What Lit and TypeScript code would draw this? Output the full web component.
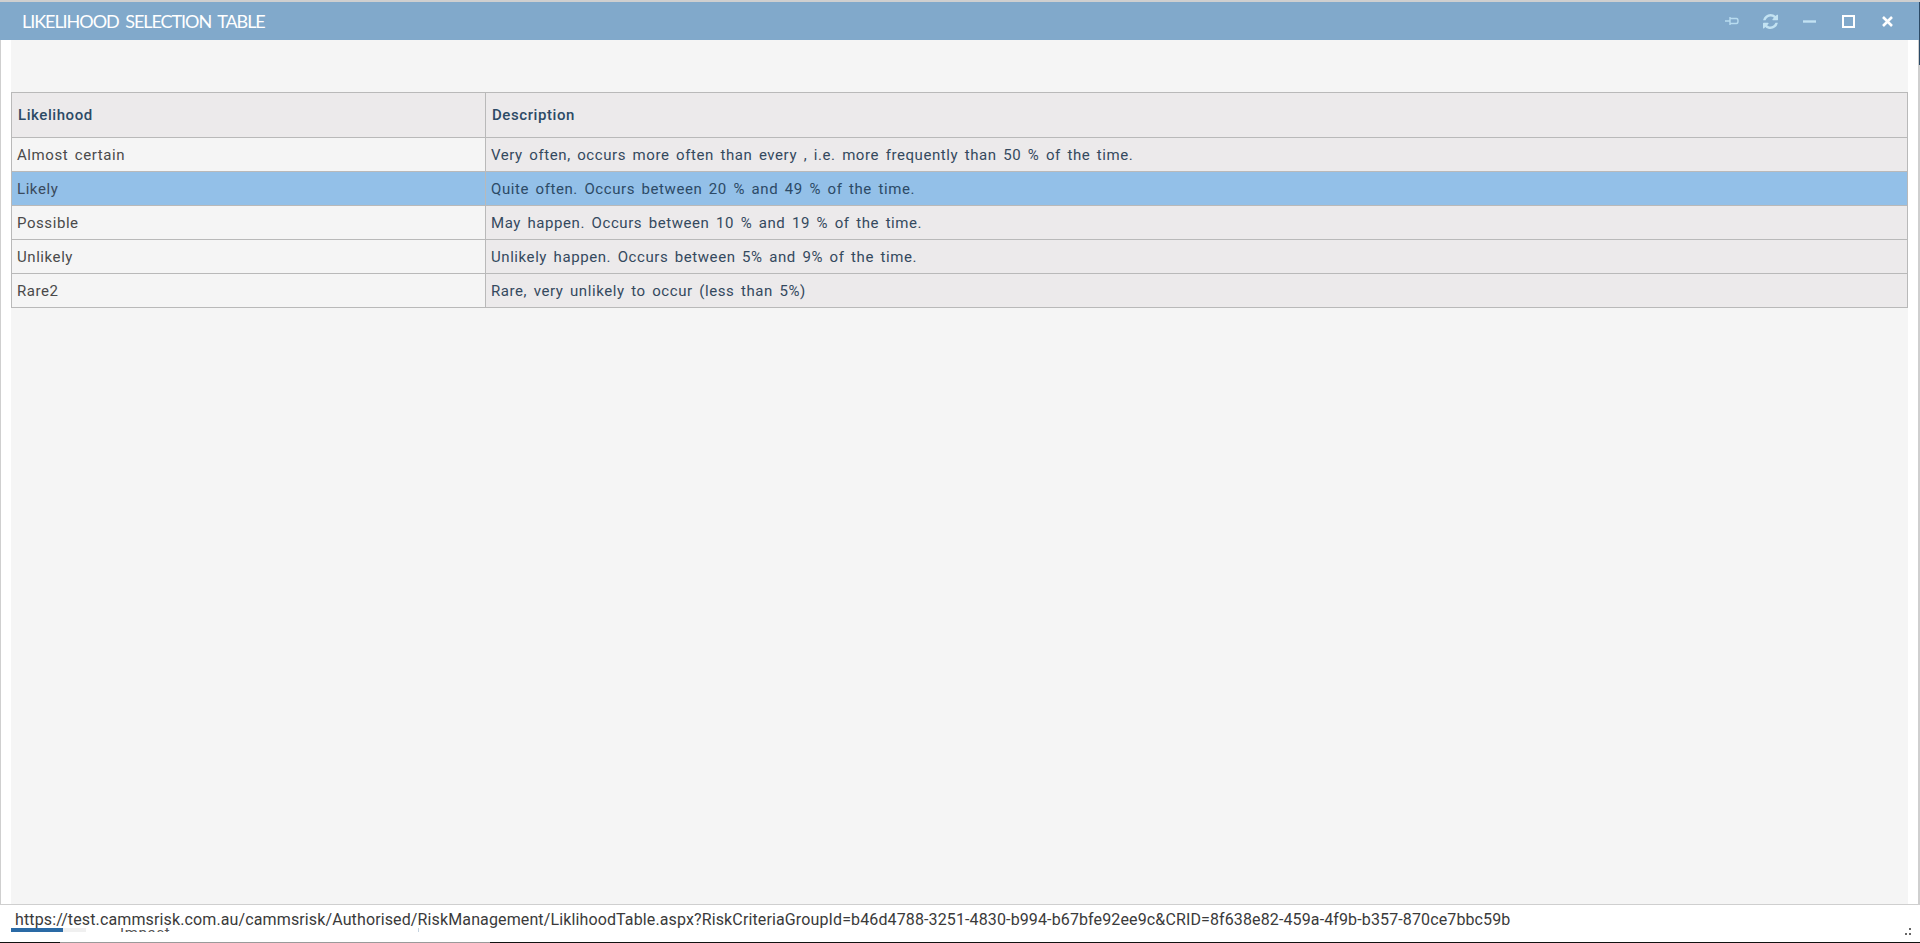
import { LitElement, html, css, svg } from "lit";
import { customElement } from "lit/decorators.js";

const ROWS = [
  ["Almost certain", "Very often, occurs more often than every , i.e. more frequently than 50 % of the time."],
  ["Likely", "Quite often. Occurs between 20 % and 49 % of the time."],
  ["Possible", "May happen. Occurs between 10 % and 19 % of the time."],
  ["Unlikely", "Unlikely happen. Occurs between 5% and 9% of the time."],
  ["Rare2", "Rare, very unlikely to occur (less than 5%)"],
];

const URL = "https://test.cammsrisk.com.au/cammsrisk/Authorised/RiskManagement/LiklihoodTable.aspx?RiskCriteriaGroupId=b46d4788-3251-4830-b994-b67bfe92ee9c&CRID=8f638e82-459a-4f9b-b357-870ce7bbc59b";

@customElement("app-root")
export class AppRoot extends LitElement {
  static styles = css`
    :host { display: flex; flex-direction: column; width: 1920px; height: 943px; position: relative; overflow: hidden; background: #fff; font-family: Roboto, "Liberation Sans", sans-serif; }
    .top { height: 2px; background: #cfcfcf; flex: none; }
    .bar { height: 38px; flex: none; background: #81a9cb; display: flex; align-items: center; box-sizing: border-box; padding-left: 22px; color: #fff; font-family: Lato, sans-serif; font-size: 18px; letter-spacing: -1.05px; word-spacing: 3px; }
    .title { flex: 1; }
    .icons { display: flex; align-items: center; margin-right: 13px; }
    .ic { width: 39px; height: 20px; display: flex; align-items: center; justify-content: center; }
    .ic svg { display: block; }
    .main { flex: 1; display: flex; min-height: 0; }
    .gutter-l { width: 11px; flex: none; box-sizing: border-box; border-left: 1px solid #cfcfcf; }
    .gutter-r { width: 12px; flex: none; box-sizing: border-box; border-right: 2px solid #cfcfcf; }
    .content { flex: 1; background: #f5f5f5; padding-top: 52px; min-width: 0; }
    table { border-collapse: collapse; width: 1897px; table-layout: fixed; font-size: 15px; word-spacing: 2.3px; letter-spacing: 0.57px; }
    col.a { width: 474px; }
    th, td { border: 1px solid #b9b9b9; padding: 0; text-align: left; }
    th { height: 44px; background: #eceaeb; color: #2c4a66; font-weight: 500; padding-left: 6px; }
    td { height: 33px; padding-left: 5px; background: #f5f5f5; color: #4a4a4a; }
    td.d { background: #eceaeb; color: #34495e; padding-left: 5px; }
    tr.sel td { background: #93c0e8; color: #3a4a5c; }
    tr.sel td.d { color: #2c4a66; }
    .status { height: 39px; flex: none; box-sizing: border-box; border-top: 1px solid #cfcfcf; border-bottom: 1px solid #9a9a9a; background: #fff; padding: 5px 0 0 15px; font-size: 16px; letter-spacing: 0.126px; color: #3a3a3a; position: relative; white-space: nowrap; line-height: 20px; }
    .prog { position: absolute; left: 11px; top: 23px; width: 75px; height: 4px; background: #f0f0f0; }
    .prog i { display: block; width: 52px; height: 4px; background: #2a6aa5; }
    .clip { position: absolute; left: 120px; top: 23px; height: 4px; overflow: hidden; font-size: 15px; line-height: 10px; letter-spacing: 0.6px; color: #555; }
    .tick { position: absolute; left: 418px; top: 23px; width: 1px; height: 4px; background: #c5d3e0; }
    .grip { position: absolute; right: 8px; bottom: 6px; display: block; }
    .edge { position: absolute; right: 0; top: 2px; width: 1px; height: 63px; background: #2c4a66; }
    .black { position: absolute; left: 0; bottom: 0; width: 60px; height: 1px; background: #111; }
    .black2 { position: absolute; left: 490px; right: 0; bottom: 0; height: 1px; background: #111; }
  `;

  render() {
    return html`
      <div class="top"></div>
      <div class="bar">
        <div class="title">LIKELIHOOD SELECTION TABLE</div>
        <div class="icons">
          <span class="ic"><svg width="14" height="10" viewBox="0 0 14 10" fill="none" stroke="#b8dcf0" stroke-width="1.4"><path d="M0 5H5M5 1V9M5 2.5H11.5Q13 2.5 13 5T11.5 7.5H5"/></svg></span>
          <span class="ic"><svg width="15" height="15" viewBox="0 0 1536 1536" fill="#c2e2f2"><path d="M1511 928q0 5-1 7-64 268-268 434.5t-478 166.5q-146 0-282.5-55t-243.5-157l-129 129q-19 19-45 19t-45-19-19-45v-448q0-26 19-45t45-19h448q26 0 45 19t19 45-19 45l-137 137q71 66 161 102t187 36q134 0 250-65t186-179q11-17 53-117 8-23 30-23h192q13 0 22.5 9.5t9.5 22.5zm25-800v448q0 26-19 45t-45 19h-448q-26 0-45-19t-19-45 19-45l138-138q-148-137-349-137-134 0-250 65t-186 179q-11 17-53 117-8 23-30 23h-199q-13 0-22.5-9.5t-9.5-22.5v-7q65-268 270-434.5t480-166.5q146 0 284 55.5t245 156.5l130-129q19-19 45-19t45 19 19 45z"/></svg></span>
          <span class="ic"><svg width="13" height="3" viewBox="0 0 13 3"><rect width="13" height="2.4" y=".3" fill="#c2e2f2"/></svg></span>
          <span class="ic"><svg width="13" height="13" viewBox="0 0 13 13" fill="none" stroke="#fff" stroke-width="2"><rect x="1" y="1" width="11" height="11"/></svg></span>
          <span class="ic"><svg width="11" height="11" viewBox="0 0 11 11" fill="none" stroke="#fff" stroke-width="2.6"><path d="M1 1 10 10M10 1 1 10"/></svg></span>
        </div>
      </div>
      <div class="main">
        <div class="gutter-l"></div>
        <div class="content">
          <table>
            <colgroup><col class="a" /><col /></colgroup>
            <thead><tr><th>Likelihood</th><th>Description</th></tr></thead>
            <tbody>
              ${ROWS.map((r, i) => html`<tr class=${i === 1 ? "sel" : ""}><td>${r[0]}</td><td class="d">${r[1]}</td></tr>`)}
            </tbody>
          </table>
        </div>
        <div class="gutter-r"></div>
      </div>
      <div class="status">
        ${URL}
        <div class="prog"><i></i></div>
        <div class="clip">Impact</div>
        <div class="tick"></div>
        <svg class="grip" width="8" height="8" viewBox="0 0 8 8" fill="#666">${svg`<rect x="5" y="0" width="2" height="2"/><rect x="1" y="5" width="2" height="2"/><rect x="5" y="5" width="2" height="2"/>`}</svg>
      </div>
      <div class="edge"></div>
      <div class="black"></div>
      <div class="black2"></div>
    `;
  }
}
